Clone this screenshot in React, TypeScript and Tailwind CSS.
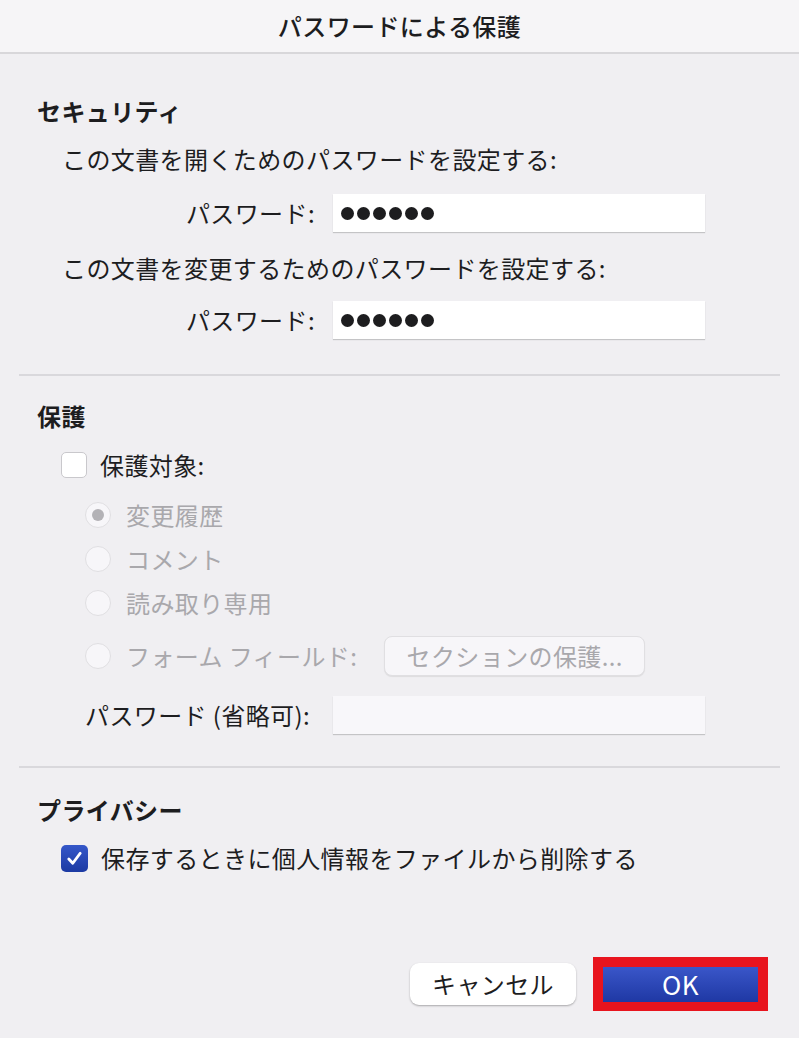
import React from 'react';

const font = { fontFamily: '"Noto Sans CJK JP", "Noto Sans", sans-serif' };

function Dots() {
  return (
    <div className="flex items-center gap-[3px] pl-[8px]">
      {[0, 1, 2, 3, 4, 5].map((i) => (
        <span key={i} className="block h-[13px] w-[13px] rounded-full bg-[#1d1d1f]" />
      ))}
    </div>
  );
}

function PasswordInput({ filled = true, disabled = false }: { filled?: boolean; disabled?: boolean }) {
  return (
    <div
      className={`flex h-[38px] w-[372px] items-center ${disabled ? 'bg-[#f8f7fa]' : 'bg-white'} shadow-[0_1px_1px_rgba(0,0,0,0.18)]`}
    >
      {filled && <Dots />}
    </div>
  );
}

function Radio({ label, selected = false }: { label: string; selected?: boolean }) {
  return (
    <div className="flex h-[32px] items-center gap-[15px] pl-[85px]">
      <span className="flex h-[26px] w-[26px] items-center justify-center rounded-full border border-[#e0dfe2] bg-[#f7f6f9]">
        {selected && <span className="block h-[12px] w-[12px] rounded-full bg-[#b3b2b6]" />}
      </span>
      <span className="text-[24px] leading-[32px] text-[#a9a8ac]">{label}</span>
    </div>
  );
}

function Separator() {
  return <div className="mx-[19px] h-[2px] bg-[#d9d8dc]" />;
}

export default function App() {
  return (
    <div className="flex h-[1038px] w-[799px] flex-col bg-[#f0eff2] tracking-[0.4px] text-[#1d1d1f]" style={font}>
      <div className="flex h-[54px] shrink-0 items-center justify-center border-b-2 border-[#d8d7da] bg-[#f6f5f7]">
        <span className="text-[24px] font-medium leading-[32px]">パスワードによる保護</span>
      </div>

      <div className="flex flex-col pt-[41px]">
        <div className="pl-[37px] text-[24px] font-bold leading-[32px]">セキュリティ</div>
        <div className="mt-[16px] pl-[62px] text-[24px] leading-[32px]">この文書を開くためのパスワードを設定する:</div>
        <div className="mt-[19px] flex items-center">
          <span className="w-[315px] text-right text-[24px] leading-[32px]">パスワード:</span>
          <span className="w-[18px]" />
          <PasswordInput />
        </div>
        <div className="mt-[20px] pl-[62px] text-[24px] leading-[32px]">この文書を変更するためのパスワードを設定する:</div>
        <div className="mt-[17px] flex items-center">
          <span className="w-[315px] text-right text-[24px] leading-[32px]">パスワード:</span>
          <span className="w-[18px]" />
          <PasswordInput />
        </div>

        <div className="mt-[35px]">
          <Separator />
        </div>

        <div className="mt-[24px] pl-[37px] text-[24px] font-bold leading-[32px]">保護</div>
        <div className="mt-[17px] flex h-[32px] items-center gap-[13px] pl-[61px]">
          <span className="block h-[26px] w-[26px] rounded-[5px] border border-[#c9c8cc] bg-white" />
          <span className="text-[24px] leading-[32px]">保護対象:</span>
        </div>
        <div className="mt-[18px] flex flex-col gap-[12px]">
          <Radio label="変更履歴" selected />
          <Radio label="コメント" />
          <Radio label="読み取り専用" />
        </div>
        <div className="mt-[17px] flex h-[40px] items-center">
          <div className="flex items-center gap-[15px] pl-[85px]">
            <span className="block h-[26px] w-[26px] rounded-full border border-[#e0dfe2] bg-[#f7f6f9]" />
            <span className="text-[24px] leading-[32px] text-[#a9a8ac]">フォーム フィールド:</span>
          </div>
          <div className="ml-[27px] flex h-[40px] w-[261px] items-center justify-center rounded-[8px] border border-[#e0dfe2] bg-[#f7f6f9] text-[24px] leading-[32px] text-[#a9a8ac] shadow-[0_1px_1px_rgba(0,0,0,0.08)]">
            セクションの保護...
          </div>
        </div>
        <div className="mt-[20px] flex items-center">
          <span className="w-[315px] pl-[85px] text-[24px] leading-[32px]">パスワード (省略可):</span>
          <span className="w-[18px]" />
          <PasswordInput filled={false} disabled />
        </div>

        <div className="mt-[32px]">
          <Separator />
        </div>

        <div className="mt-[26px] pl-[37px] text-[24px] font-bold leading-[32px]">プライバシー</div>
        <div className="mt-[16px] flex h-[32px] items-center gap-[13px] pl-[61px]">
          <span className="flex h-[27px] w-[27px] items-center justify-center rounded-[5px] bg-gradient-to-b from-[#3557c9] to-[#1c3aa3]">
            <svg width="19" height="19" viewBox="0 0 20 20" fill="none">
              <path d="M4 10.5 L8.2 15 L16 4.5" stroke="white" strokeWidth="3" strokeLinecap="round" strokeLinejoin="round" />
            </svg>
          </span>
          <span className="text-[24px] leading-[32px]">保存するときに個人情報をファイルから削除する</span>
        </div>
      </div>

      <div className="mt-auto flex items-center justify-end gap-[17px] pb-[27px] pr-[31px]">
        <div className="flex h-[42px] w-[166px] items-center justify-center rounded-[9px] bg-white text-[24px] leading-[32px] shadow-[0_1px_2px_rgba(0,0,0,0.3)]">
          キャンセル
        </div>
        <div className="flex h-[54px] w-[175px] items-center justify-center bg-[#e8141e]">
          <div className="flex h-[35px] w-[155px] items-center justify-center bg-gradient-to-b from-[#3a56c9] to-[#1f38a4] text-[26px] leading-[32px] text-white">
            OK
          </div>
        </div>
      </div>
    </div>
  );
}
